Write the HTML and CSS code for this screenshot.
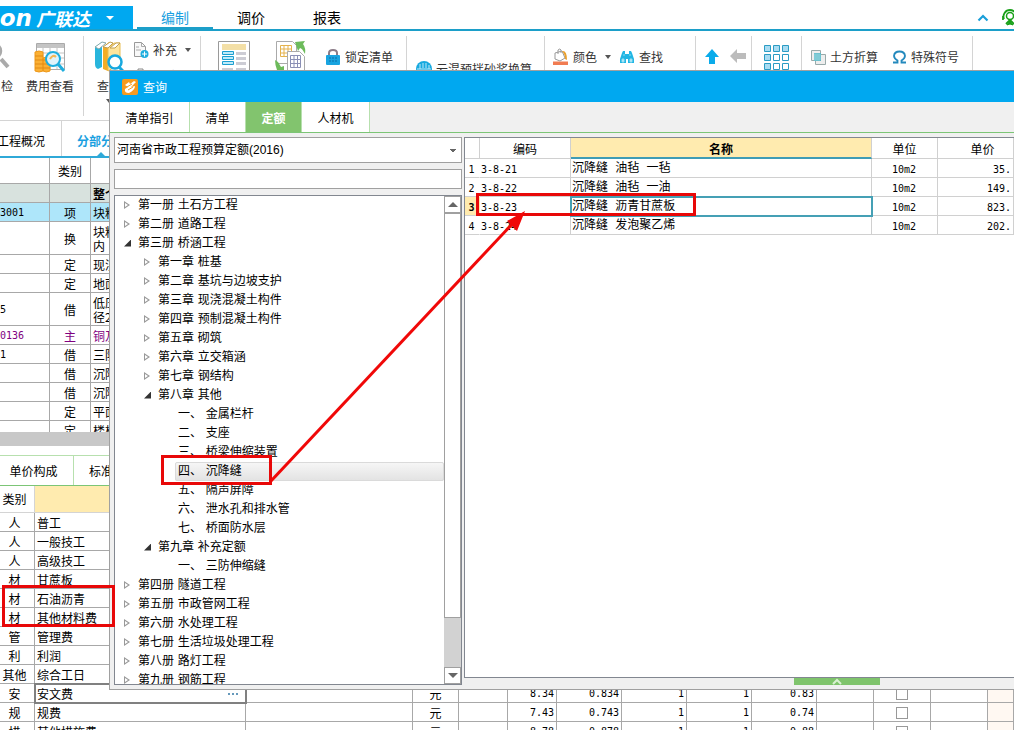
FILE: index.html
```
<!DOCTYPE html>
<html lang="zh-CN">
<head>
<meta charset="utf-8">
<title>广联达 - 查询</title>
<link rel="stylesheet" href="styles.css">
</head>
<body>
<div class="app">
  <header class="menubar">
    <button class="brand"><span class="brand-latin">on</span><span class="brand-cn">广联达</span><span class="caret caret-light"></span></button>
    <nav class="menu">
      <button class="menu-tab is-active">编制</button>
      <button class="menu-tab">调价</button>
      <button class="menu-tab">报表</button>
    </nav>
    <div class="menu-end">
      <svg width="12" height="8" viewBox="0 0 12 8"><path d="M1.500 6.500 6 2l4.500 4.500" fill="none" stroke="#1a9fd9" stroke-width="2.200"/></svg>
      <svg width="18" height="18" viewBox="0 0 18 18" fill="none" stroke="#18a018"><circle cx="9" cy="7" r="3.500" stroke-width="1.500"/><path d="M3 10a6.500 6.500 0 1 1 12 0M2 7v4M5 15l3-3h2l3 3" stroke-width="1.800"/><path d="m9 12-3 4 3-1 3 1z" fill="#18a018"/></svg>
    </div>
  </header>

  <div class="ribbon">
    <div class="group group-check">
      <button class="big-tool tool-selfcheck">
        <svg width="32" height="32" viewBox="0 0 32 32"><circle cx="9" cy="10" r="7" fill="#eee" stroke="#aaa" stroke-width="2.500"/><path d="m16 18 7 8" stroke="#aaa" stroke-width="4"/></svg>
        <span>自检</span>
      </button>
      <button class="big-tool tool-cost">
        <svg width="32" height="32" viewBox="0 0 32 32"><path d="M2.500 2.500h28v26h-28z" fill="#fff" stroke="#aaa"/><path d="M3 3h27v4H3z" fill="#c4c4c4"/><path d="M3 12h27M3 17h27M3 23h27M9 7v21M16 7v21M23 7v21" stroke="#c4c4c4"/><path d="M1 11q4-2 8 0v19q-4 2-8 0zM9 17q4-2 7 0v13q-4 2-7 0z" fill="#fbb034" stroke="#ee9818"/><path d="M1 15h8M1 19h15M1 23h15M1 27h15" stroke="#e18a14"/><circle cx="19" cy="18" r="7" fill="#dff3fb" stroke="#1eaede" stroke-width="2"/><path d="M16 18q3-5 6-2" stroke="#f4b656" stroke-width="2" fill="none"/><path d="m24 23 6 7" stroke="#1eaede" stroke-width="3"/></svg>
        <span>费用查看</span>
      </button>
    </div>
    <div class="group group-query">
      <button class="big-tool">
        <svg width="32" height="32" viewBox="0 0 32 32"><path d="M2 6 9 1v25l-4 2q-3-1-3-5z" fill="#28b5dc"/><path d="m2 6 7-5 4 1-7 6z" fill="#fff" stroke="#8aa"/><path d="m10 6 6-5 4 1v22l-5 6-5-2z" fill="#f3ad25"/><path d="m15 7 6-5h6v22l-7 3-5 3z" fill="#ffe59c" stroke="#e8bd55"/><path d="m10 6 7-5 3 1-5 5zm7 1 6-5h4l-5 5z" fill="#fff" stroke="#c1a050"/><circle cx="22" cy="21" r="6.500" fill="#fff" stroke="#18a9df" stroke-width="2.500"/><path d="m26 26 5 5" stroke="#18a9df" stroke-width="3"/></svg>
        <span>查询</span><span class="caret"></span>
      </button>
      <div class="stack">
        <button class="tool">
          <svg width="16" height="18" viewBox="0 0 16 18"><path d="M1.500 1.500h7l4 4v10h-11z" fill="#f8f8f8" stroke="#999"/><path d="M8.500 1.500v4h4M3 6h3M3 9h5" fill="none" stroke="#aaa"/><circle cx="11.500" cy="13" r="4" fill="#1eaede"/><path d="M9 13h5M11.500 10.500v5" stroke="#fff"/></svg>
          <span>补充</span><span class="caret"></span>
        </button>
        <button class="tool">
          <svg width="16" height="18" viewBox="0 0 16 18"><path d="M2 4h11M5 4V2h5v2M3 4l1 12h7l1-12" fill="none" stroke="#888"/></svg>
          <span>删除</span>
        </button>
      </div>
    </div>
    <div class="group group-list">
      <button class="icon-tool" aria-label="标准组价">
        <svg width="32" height="32" viewBox="0 0 32 32"><path d="M.5.500h31v31H.5z" fill="#fff" stroke="#9a9a9a"/><path d="M4 3h24v6H4z" fill="#f3dfa6"/><path d="M18 11h10v3H18zM18 16h10v3H18zM18 21h10v3H18zM4 27h11v3H4zM18 27h10v3H18z" fill="#ccccd4"/><path d="M4.500 10.500h11v3h-11zM4.500 15.500h11v3h-11zM4.500 20.500h11v3h-11z" fill="#bdeafa" stroke="#1b9fd0"/></svg>
      </button>
      <button class="icon-tool" aria-label="整理清单">
        <svg width="32" height="32" viewBox="0 0 32 32"><path d="M1.500.500h16l4 4v18h-20z" fill="#fff" stroke="#aaa"/><path d="M5.500 4.500h11v11h-11zM5.500 8h11M5.500 12h11M9 4.500v11M13 4.500v11" fill="none" stroke="#e5b24c"/><path d="M12.500 10.500h12l5 5v16h-17z" fill="#fff" stroke="#aaa"/><path d="M15.500 14.500h10v12h-10zM15.500 18.500h10M15.500 22.500h10M19 14.500v12M22.500 14.500v12" fill="none" stroke="#8a8fb5"/><path d="m20 1 10-1-2 3q3 4 2 10-3-6-5-6l-2 3zM0 19l3 2 3 5 3-1v6H0l2-2Q0 24 0 19z" fill="#6dbb5b"/></svg>
      </button>
      <button class="tool tool-lock">
        <svg width="16" height="18" viewBox="0 0 16 18"><path d="M4 8V5q0-3 4-3t4 3v3" fill="none" stroke="#8b7c88" stroke-width="2"/><rect x="1" y="7" width="14" height="10" rx="1" fill="#18a4e0"/><path d="M4 10h2M7 10h2M10 10h2M4 13h2M7 13h2M10 13h2" stroke="#0b6fa8"/></svg>
        <span>锁定清单</span>
      </button>
    </div>
    <div class="group group-convert">
      <button class="tool">
        <svg width="16" height="16" viewBox="0 0 16 16"><circle cx="8" cy="8" r="8" fill="#18a9df"/><path d="M4 3v5M7 2v5M10 2v5M13 4v4M1 8h14" stroke="#bdeafa"/></svg>
        <span>云混预拌砂浆换算</span>
      </button>
    </div>
    <div class="group group-find">
      <button class="tool">
        <svg width="17" height="18" viewBox="0 0 17 18"><path d="M1 13.500h15V17H1z" fill="#f17c52"/><path d="m3 5 7-2 3 7-5 3-5-2z" fill="#fff" stroke="#999"/><path d="M6 6V2q2-2 3 0v3" fill="none" stroke="#999"/><path d="M10 3q5-1 5 9l-2-1q0-5-3-8z" fill="#eaa02c"/></svg>
        <span>颜色</span><span class="caret"></span>
      </button>
      <button class="tool tool-binoculars">
        <svg width="16" height="16" viewBox="0 0 16 16"><path d="M4 2h2v3h4V2h2l1 2 2 6v4H9v-4H7v4H1v-4l2-6z" fill="#22b6e4"/><path d="M4 6h2M10 6h2M3 10h2v3H3zM11 10h2v3h-2z" fill="#d5f3fb" stroke="#8bdcf2"/></svg>
        <span>查找</span>
      </button>
    </div>
    <div class="group group-move">
      <button class="icon-tool" aria-label="上移"><svg width="14" height="16" viewBox="0 0 14 16"><path d="m7 0 7 8h-4v7H4V8H0z" fill="#0aabea"/></svg></button>
      <button class="icon-tool" aria-label="左移"><svg width="16" height="14" viewBox="0 0 16 14"><path d="m0 7 7-7v4h9v6H7v4z" fill="#bcbcbc"/></svg></button>
    </div>
    <div class="group group-grid">
      <button class="icon-tool" aria-label="其他">
        <svg width="26" height="26" viewBox="0 0 26 26" fill="#fff" stroke="#2b9cc4"><path d="M.5.500h6v6h-6zM9.500.500h6v6h-6zM18.500.500h6v6h-6zM.5 9.500h6v6h-6zM.5 18.500h6v6h-6z" fill="#a9dcf2"/><path d="M9.500 9.500h6v6h-6zM18.500 9.500h6v6h-6zM9.500 18.500h6v6h-6zM18.500 18.500h6v6h-6z"/></svg>
      </button>
    </div>
    <div class="group group-extra">
      <button class="tool">
        <svg width="15" height="15" viewBox="0 0 15 15"><path d="M.5.500h9v10h-9z" fill="#eee" stroke="#9aa"/><path d="M4.500 4.500h10v10h-10z" fill="#eee" stroke="#9aa"/><path d="M3 3h7v8H3z" fill="#55b7c6"/><path d="M4 3v8M6 3v8M8 3v8M3 5h7M3 7h7M3 9h7" stroke="#b7e4ea" stroke-width=".5"/></svg>
        <span>土方折算</span>
      </button>
      <button class="tool">
        <svg width="15" height="14" viewBox="0 0 15 14"><path d="M1 12.500h4.500v-2Q2 8.500 2 5.800 2.500 1.500 7.500 1.500T13 5.800q0 2.700-3.500 4.700v2H14" fill="none" stroke="#2389bd" stroke-width="1.800"/></svg>
        <span>特殊符号</span>
      </button>
    </div>
  </div>

  <nav class="page-tabs">
    <button class="page-tab page-tab-first">工程概况</button>
    <button class="page-tab is-active">分部分项</button>
  </nav>

  <div class="items">
    <table class="grid items-grid">
      <colgroup><col class="c-code"><col class="c-kind"><col></colgroup>
      <thead><tr><th></th><th>类别</th><th></th></tr></thead>
      <tbody>
        <tr class="row-total"><td></td><td></td><td>整个项目</td></tr>
        <tr class="row-current"><td>3001</td><td>项</td><td>块料面层</td></tr>
        <tr class="row-tall"><td></td><td>换</td><td>块料<br>内</td></tr>
        <tr><td></td><td>定</td><td>现浇混凝土</td></tr>
        <tr><td></td><td>定</td><td>地面</td></tr>
        <tr class="row-tall"><td>5</td><td>借</td><td>低压<br>径20</td></tr>
        <tr class="row-main"><td>0136</td><td>主</td><td>铜及铜合金</td></tr>
        <tr><td>1</td><td>借</td><td>三防伸缩缝</td></tr>
        <tr><td></td><td>借</td><td>沉降缝</td></tr>
        <tr><td></td><td>借</td><td>沉降缝</td></tr>
        <tr><td></td><td>定</td><td>平面</td></tr>
        <tr><td></td><td>定</td><td>楼梯</td></tr>
      </tbody>
    </table>
  </div>
  <div class="splitter"></div>
  <nav class="detail-tabs">
    <button class="detail-tab">单价构成</button>
    <button class="detail-tab">标准换算</button>
  </nav>
  <div class="detail">
    <table class="grid detail-grid">
      <colgroup><col class="d-kind"><col class="d-name"><col class="d-spec"><col class="d-unit"><col class="d-a"><col class="d-a"><col class="d-b"><col class="d-b"><col class="d-b"><col class="d-b"><col class="d-c"><col class="d-c"><col class="d-c"><col></colgroup>
      <thead><tr><th>类别</th><th class="hot"></th><th colspan="12"></th></tr></thead>
      <tbody>
        <tr><td>人</td><td>普工</td><td colspan="12"></td></tr>
        <tr><td>人</td><td>一般技工</td><td colspan="12"></td></tr>
        <tr><td>人</td><td>高级技工</td><td colspan="12"></td></tr>
        <tr><td>材</td><td>甘蔗板</td><td colspan="12"></td></tr>
        <tr><td>材</td><td>石油沥青</td><td colspan="12"></td></tr>
        <tr><td>材</td><td>其他材料费</td><td colspan="12"></td></tr>
        <tr><td>管</td><td>管理费</td><td colspan="12"></td></tr>
        <tr><td>利</td><td>利润</td><td colspan="12"></td></tr>
        <tr><td>其他</td><td>综合工日</td><td colspan="12"></td></tr>
        <tr><td>安</td><td class="editing"><div class="edit-cell"><span>安文费</span><button class="more" aria-label="更多"><i></i><i></i><i></i></button></div></td><td></td><td class="mid">元</td><td></td><td class="num">8.34</td><td class="num">0.834</td><td class="num">1</td><td class="num">1</td><td class="num">0.83</td><td></td><td class="mid"><input type="checkbox" aria-label="安文费"></td><td></td><td class="tint"></td></tr>
        <tr><td>规</td><td>规费</td><td></td><td class="mid">元</td><td></td><td class="num">7.43</td><td class="num">0.743</td><td class="num">1</td><td class="num">1</td><td class="num">0.74</td><td></td><td class="mid"><input type="checkbox" aria-label="规费"></td><td></td><td class="tint"></td></tr>
        <tr><td>措</td><td>其他措施费</td><td></td><td class="mid">元</td><td></td><td class="num">8.78</td><td class="num">0.878</td><td class="num">1</td><td class="num">1</td><td class="num">0.88</td><td></td><td class="mid"><input type="checkbox" aria-label="其他措施费"></td><td></td><td class="tint"></td></tr>
      </tbody>
    </table>
  </div>

  <section class="dialog" role="dialog" aria-label="查询">
    <div class="dialog-title">
      <svg width="16" height="16" viewBox="0 0 16 16"><rect width="16" height="16" rx="2" fill="#f79a1e"/><path d="m3 6 4-3 1 2 4-3 2 1-5 5 4-1q0 4-6 7-5 0-4-4l3-2z" fill="#fff"/><path d="m5 8 5-3M6 11l5-3" stroke="#f79a1e"/></svg>
      <span>查询</span>
    </div>
    <nav class="dialog-tabs">
      <button class="dialog-tab t-guide">清单指引</button>
      <button class="dialog-tab t-list">清单</button>
      <button class="dialog-tab t-quota is-active">定额</button>
      <button class="dialog-tab t-res">人材机</button>
    </nav>
    <div class="dialog-body">
      <div class="side">
        <select class="book" aria-label="定额库"><option>河南省市政工程预算定额(2016)</option></select>
        <input class="search" type="text" aria-label="搜索">
        <div class="tree-box">
          <ul class="tree">
            <li><span class="node"><i class="tri"></i>第一册 土石方工程</span></li>
            <li><span class="node"><i class="tri"></i>第二册 道路工程</span></li>
            <li><span class="node"><i class="tri open"></i>第三册 桥涵工程</span>
              <ul>
                <li><span class="node"><i class="tri"></i>第一章 桩基</span></li>
                <li><span class="node"><i class="tri"></i>第二章 基坑与边坡支护</span></li>
                <li><span class="node"><i class="tri"></i>第三章 现浇混凝土构件</span></li>
                <li><span class="node"><i class="tri"></i>第四章 预制混凝土构件</span></li>
                <li><span class="node"><i class="tri"></i>第五章 砌筑</span></li>
                <li><span class="node"><i class="tri"></i>第六章 立交箱涵</span></li>
                <li><span class="node"><i class="tri"></i>第七章 钢结构</span></li>
                <li><span class="node"><i class="tri open"></i>第八章 其他</span>
                  <ul class="leaves">
                    <li><span class="node">一、 金属栏杆</span></li>
                    <li><span class="node">二、 支座</span></li>
                    <li><span class="node">三、 桥梁伸缩装置</span></li>
                    <li><span class="node is-selected">四、 沉降缝</span></li>
                    <li><span class="node">五、 隔声屏障</span></li>
                    <li><span class="node">六、 泄水孔和排水管</span></li>
                    <li><span class="node">七、 桥面防水层</span></li>
                  </ul>
                </li>
                <li><span class="node"><i class="tri open"></i>第九章 补充定额</span>
                  <ul class="leaves"><li><span class="node">一、 三防伸缩缝</span></li></ul>
                </li>
              </ul>
            </li>
            <li><span class="node"><i class="tri"></i>第四册 隧道工程</span></li>
            <li><span class="node"><i class="tri"></i>第五册 市政管网工程</span></li>
            <li><span class="node"><i class="tri"></i>第六册 水处理工程</span></li>
            <li><span class="node"><i class="tri"></i>第七册 生活垃圾处理工程</span></li>
            <li><span class="node"><i class="tri"></i>第八册 路灯工程</span></li>
            <li><span class="node"><i class="tri"></i>第九册 钢筋工程</span></li>
          </ul>
          <div class="scroll">
            <button class="scroll-btn" aria-label="向上"><svg width="10" height="5" viewBox="0 0 10 5"><path d="M0 5h10L5 0z" fill="#666"/></svg></button>
            <div class="scroll-thumb"></div>
            <div class="scroll-track"></div>
            <button class="scroll-btn" aria-label="向下"><svg width="10" height="5" viewBox="0 0 10 5"><path d="M0 0h10L5 5z" fill="#666"/></svg></button>
          </div>
        </div>
      </div>
      <div class="main">
        <div class="result-box">
          <table class="result">
            <colgroup><col class="r-no"><col class="r-code"><col><col class="r-unit"><col class="r-price"></colgroup>
            <thead><tr><th></th><th>编码</th><th class="hot">名称</th><th>单位</th><th class="price-head">单价</th></tr></thead>
            <tbody>
              <tr><td class="no">1</td><td>3-8-21</td><td>沉降缝 油毡 一毡</td><td class="mid">10m2</td><td class="num">35.</td></tr>
              <tr><td class="no">2</td><td>3-8-22</td><td>沉降缝 油毡 一油</td><td class="mid">10m2</td><td class="num">149.</td></tr>
              <tr><td class="no now">3</td><td>3-8-23</td><td class="focus">沉降缝 沥青甘蔗板</td><td class="mid">10m2</td><td class="num">823.</td></tr>
              <tr><td class="no">4</td><td>3-8-24</td><td>沉降缝 发泡聚乙烯</td><td class="mid">10m2</td><td class="num">202.</td></tr>
            </tbody>
          </table>
        </div>
        <button class="drawer" aria-label="展开"><svg width="10" height="7" viewBox="0 0 10 7"><path d="m1 6 4-4 4 4" fill="none" stroke="#d9f0d2" stroke-width="2"/></svg></button>
      </div>
    </div>
  </section>

  <svg class="marks" width="1014" height="730" viewBox="0 0 1014 730" aria-hidden="true">
    <g fill="none" stroke="#e80808" stroke-width="3">
      <path d="M3.500 586.500h110v39H3.500zM162.500 456.500h108v27h-108zM477.500 194.500h217v20h-217z"/>
      <path d="M271 481 515 221" stroke="#f00808"/>
    </g>
    <path d="m525 211-18 10 10 10z" fill="#f00808"/>
  </svg>
</div>
</body>
</html>
```
FILE: styles.css
```
* { box-sizing: border-box; }
body {
  margin: 0;
  font: 12px/18px "Noto Sans CJK SC", sans-serif;
  color: #000;
  background: #fff;
}
button, input, select { font: inherit; color: inherit; }
button { border: 0; padding: 0; background: none; white-space: nowrap; }
ul { list-style: none; margin: 0; padding: 0; }
svg { display: block; flex: none; }

.app {
  position: relative;
  display: flex;
  flex-direction: column;
  height: 100vh;
  overflow: hidden;
}
.app > * { flex: none; }

.caret {
  border: 3px solid transparent;
  border-top: 4px solid #555;
  border-bottom: 0;
}
.caret-light { border-width: 4px 4px 0; border-top-color: #fff; }

/* menu bar */
.menubar {
  display: flex;
  align-items: stretch;
  height: 31px;
  padding-top: 6px;
  border-bottom: 2px solid #1c9fc9;
}
.brand {
  display: flex;
  align-items: center;
  width: 133px;
  margin-right: 4px;
  background: #00a8f0;
  color: #fff;
  font-style: italic;
  font-weight: 700;
}
.brand-latin { width: 36px; font: italic 700 23px/20px "DejaVu Sans", sans-serif; direction: rtl; padding-right: 4px; }
.brand-cn { width: 70px; font-size: 18px; text-align: left; }
.menu { display: flex; }
.menu-tab { width: 76px; padding-bottom: 2px; font-size: 14px; }
.menu-tab.is-active { padding-bottom: 0; color: #1a9fe0; border-bottom: 2px solid #1c9fc9; }
.menu-end { display: flex; align-items: center; gap: 12px; margin: 0 -5px 0 auto; }

/* ribbon */
.ribbon {
  display: flex;
  height: 90px;
  padding-top: 5px;
  border-bottom: 1px solid #d4d4d4;
  color: #333;
}
.group {
  display: flex;
  align-items: flex-start;
  height: 80px;
  padding-top: 5px;
  border-right: 1px solid #d4d4d4;
}
.big-tool { display: flex; flex-direction: column; align-items: center; gap: 4px; }
.tool { display: flex; align-items: center; gap: 4px; height: 18px; }
.tool .caret { margin-left: 4px; }
.group-check { width: 84px; }
.tool-selfcheck { width: 32px; margin-left: -15px; }
.tool-cost { width: 68px; }
.group-query { width: 117px; padding-left: 9px; gap: 8px; }
.stack { display: flex; flex-direction: column; gap: 8px; }
.group-list { width: 206px; padding-left: 17px; gap: 25px; }
.tool-lock, .group-find .tool, .group-extra .tool { margin-top: 7px; }
.tool-lock { margin-left: -7px; }
.group-convert { width: 138px; padding: 24px 0 0 9px; }
.group-find { width: 151px; padding-left: 7px; gap: 8px; }
.group-move { width: 56px; padding: 13px 0 0 9px; gap: 11px; }
.group-grid { width: 50px; padding: 9px 0 0 12px; }
.group-extra { width: 171px; padding-left: 9px; gap: 14px; }

/* page tabs */
.page-tabs { display: flex; height: 37px; border-bottom: 2px solid #2fa9d8; }
.page-tab { width: 78px; padding-top: 4px; }
.page-tab-first { width: 62px; padding: 4px 16px 0 0; border-right: 1px solid #d4d4d4; direction: rtl; }
.page-tab.is-active { position: relative; color: #1a9fe0; font-weight: 700; }
.page-tab.is-active::after {
  content: "";
  position: absolute;
  bottom: 0;
  left: 35px;
  border: 4px solid transparent;
  border-top: 0;
  border-bottom-color: #2fa9d8;
}

/* data grids */
.grid, .result { width: 100%; table-layout: fixed; border-collapse: separate; border-spacing: 0; }
.grid th, .grid td, .result th, .result td {
  height: 19px;
  padding: 0 2px;
  border-right: 1px solid #a8a8a8;
  border-bottom: 1px solid #a8a8a8;
  font-weight: 400;
  line-height: 16px;
  text-align: left;
  white-space: nowrap;
  overflow: hidden;
}
.grid td, .result td { padding-top: 2px; }
.items { height: 274px; overflow: hidden; }
.c-code { width: 50px; }
.c-kind { width: 41px; }
.items-grid th { height: 26px; }
.items-grid th:nth-child(2), .items-grid td:nth-child(2) { text-align: center; }
.items-grid td:first-child { padding-left: 0; font: 10px/16px "DejaVu Sans Mono", monospace; }
.items-grid .row-total td { background: #d8e2de; font-weight: 700; }
.items-grid .row-current td { background: #aee6fa; }
.items-grid .row-tall td { height: 33px; line-height: 14px; }
.items-grid .row-main { color: #800080; }
.splitter { height: 14px; background: #c8c8c8; }
.detail-tabs { display: flex; height: 40px; padding-top: 9px; border-bottom: 1px solid #7cc576; }
.detail-tab { width: 74px; padding-right: 6px; border-top: 1px solid #b7e0ae; border-right: 1px solid #b7e0ae; }
.detail-tab + .detail-tab { width: 79px; padding: 0; }
.detail-grid th { height: 27px; border-right-color: #d4d4d4; border-bottom-color: #d4d4d4; }
.hot { background: #ffebaf; }
.d-kind { width: 35px; }
.d-name { width: 211px; }
.d-spec { width: 167px; }
.d-unit { width: 46px; }
.d-a { width: 49px; }
.d-b { width: 65px; }
.d-c { width: 57px; }
.detail-grid th:first-child, .detail-grid td:first-child { padding-left: 0; padding-right: 5px; text-align: center; }
.grid .mid, .result .mid { text-align: center; }
.grid .num, .result .num { text-align: right; font-family: "DejaVu Sans Mono", monospace; font-size: 10px; }
.grid .tint { background: #fff8f2; }
.grid .editing { outline: 2px solid #808080; outline-offset: -1px; }
.edit-cell { display: flex; align-items: center; justify-content: space-between; }
.more { display: flex; gap: 2px; padding-right: 5px; }
.more i { width: 2px; height: 2px; background: #6699bb; }
.detail input { appearance: none; display: block; width: 12px; height: 12px; margin: 0 auto; border: 1px solid #999; background: #fff; }

/* query dialog */
.dialog {
  position: absolute;
  top: 70px;
  right: 0;
  bottom: 40px;
  left: 109px;
  display: flex;
  flex-direction: column;
  border: solid #a0a0a0;
  border-width: 1px 0 1px 1px;
  background: #f0f0f0;
}
.dialog-title {
  display: flex;
  align-items: center;
  gap: 5px;
  height: 31px;
  padding-left: 12px;
  background: #00a8f0;
  color: #fff;
}
.dialog-tabs { display: flex; height: 31px; border-bottom: 1px solid #7cc576; }
.dialog-tab { padding-top: 2px; background: #fff; border-right: 1px solid #b7e0ae; }
.dialog-tab.is-active { background: #82c46e; color: #fff; font-weight: 700; }
.t-guide { width: 80px; }
.t-list { width: 56px; }
.t-quota { width: 56px; }
.t-res { width: 68px; }
.dialog-body { flex: 1; display: flex; gap: 2px; min-height: 0; padding: 4px 0 4px 4px; }
.side { display: flex; flex-direction: column; gap: 6px; width: 348px; }
.book {
  appearance: none;
  height: 26px;
  padding: 0 2px;
  border: 1px solid #a0a0a0;
  border-radius: 0;
  background: #fff conic-gradient(from -45deg at 3px 3px, #666 0 90deg, transparent 0) no-repeat right 5px center / 6px 3px;
  font-family: "Liberation Sans", "Noto Sans CJK SC", sans-serif;
}
.search { height: 20px; padding: 0 3px; border: 1px solid #a0a0a0; background: #fff; }
.tree-box { flex: 1; display: flex; min-height: 0; border: 1px solid #828790; background: #fff; overflow: hidden; }
.tree { flex: 1; font-family: "DejaVu Sans", "Noto Sans CJK SC", sans-serif; }
.tree ul { padding-left: 20px; }
.node { display: flex; align-items: center; height: 19px; padding: 0 0 1px 9px; white-space: nowrap; }
.tree .leaves { margin-left: 20px; padding-left: 0; }
.leaves .node { padding-left: 3px; margin-left: 20px; }
.node.is-selected { background: linear-gradient(#f7f7f7, #e2e2e2); outline: 1px solid #dadada; outline-offset: -1px; border-radius: 2px; }
.tri { width: 6px; height: 8px; margin-right: 8px; background: #999; clip-path: polygon(0 0, 100% 50%, 0 100%, 0 0, 1px 2px, 1px 6px, 4px 4px, 1px 2px); }
.tri.open { width: 7px; height: 7px; margin-right: 7px; background: #333; clip-path: polygon(100% 0, 100% 100%, 0 100%); }
.scroll { display: flex; flex-direction: column; width: 17px; background: #d2d2d2; }
.scroll-btn { display: flex; align-items: center; justify-content: center; height: 17px; border: 1px solid #a0a0a0; background: #fff; }
.scroll-thumb { flex: 405; border: 1px solid #a0a0a0; background: #fff; }
.scroll-track { flex: 49; }
.main { flex: 1; display: flex; flex-direction: column; min-width: 0; }
.result-box { flex: 1; border: solid #828790; border-width: 1px 0 1px 1px; background: #fff; overflow: hidden; }
.result th, .result td { border-color: #d0d0d0; }
.result th { height: 21px; padding-top: 2px; text-align: center; }
.result td { font-family: "Liberation Mono", "Noto Sans CJK SC", monospace; line-height: 15px; padding-left: 1px; }
.result td:nth-child(2), .result .mid, .result .no { font-family: "DejaVu Sans Mono", monospace; font-size: 10px; }
.r-no { width: 15px; }
.r-code { width: 91px; }
.r-unit { width: 66px; }
.r-price { width: 76px; }
.result .hot { font-weight: 700; border-bottom: 2px solid #3f9cb5; }
.result .price-head { padding-left: 16px; }
.result .no { text-align: center; border-right-color: transparent; }
.result .now { background: #ffebaf; font-weight: 700; }
.result .focus { outline: 2px solid #45a0b5; outline-offset: -1px; }
.drawer { align-self: center; display: flex; justify-content: center; width: 86px; height: 7px; margin-left: 196px; background: #7fc46c; }

/* callouts over the window */
.marks { position: absolute; top: 0; left: 0; pointer-events: none; }
```
